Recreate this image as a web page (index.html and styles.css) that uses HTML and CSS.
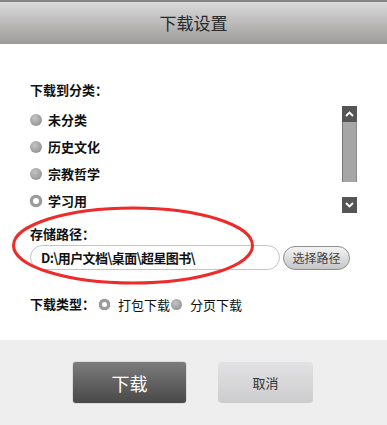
FILE: index.html
```html
<!DOCTYPE html>
<html lang="zh-CN">
<head>
    <meta charset="UTF-8">
    <title>下载设置</title>
    <meta name="viewport" content="width=device-width, initial-scale=1.0">
    <link rel="stylesheet" href="styles.css">
</head>
<body>
    <div class="dialog">
        <div class="header">下载设置</div>
        <div class="content">
            <div class="label">下载到分类：</div>
            <div class="category-box">
                <ul class="category-list">
                    <li><span class="radio"></span>未分类</li>
                    <li><span class="radio"></span>历史文化</li>
                    <li><span class="radio"></span>宗教哲学</li>
                    <li><span class="radio on"></span>学习用</li>
                </ul>
                <div class="scrollbar">
                    <div class="scroll-btn">
                        <svg width="9" height="6" viewBox="0 0 9 6"><polyline points="1,5 4.5,1.5 8,5" fill="none" stroke="#fff" stroke-width="1.8"/></svg>
                    </div>
                    <div class="scroll-track"></div>
                    <div class="scroll-gap"></div>
                    <div class="scroll-btn">
                        <svg width="9" height="6" viewBox="0 0 9 6"><polyline points="1,1 4.5,4.5 8,1" fill="none" stroke="#fff" stroke-width="1.8"/></svg>
                    </div>
                </div>
            </div>
            <div class="label label-path">存储路径：</div>
            <div class="path-row">
                <div class="path-input">D:\用户文档\桌面\超星图书\</div>
                <button class="path-btn">选择路径</button>
            </div>
            <div class="type-row">
                <span class="label">下载类型：</span>
                <span class="radio on"></span><span class="type-text">打包下载</span>
                <span class="radio"></span><span class="type-text">分页下载</span>
            </div>
        </div>
        <div class="footer">
            <button class="btn-download">下载</button>
            <button class="btn-cancel">取消</button>
        </div>
        <!-- red marker drawn over the path field -->
        <svg class="marker" width="387" height="425" viewBox="0 0 387 425">
            <ellipse cx="133" cy="245.5" rx="119.5" ry="37.5" fill="none" stroke="#ee2a2a" stroke-width="3"/>
        </svg>
    </div>
</body>
</html>
```

FILE: styles.css
```css
body { margin: 0; background: #fff; font-family: "Noto Sans CJK SC", "Liberation Sans", sans-serif; color: #111; }
.dialog { position: relative; width: 387px; height: 425px; overflow: hidden; background: #fff; }
.header { height: 42px; border-top: 2px solid #858585; background: linear-gradient(#dadada, #9e9a9a); color: #2a2a2a; font-size: 17px; line-height: 42px; text-align: center; }
.content { height: 296px; padding-left: 30px; box-sizing: border-box; padding-top: 38px; }
.label { font-size: 13px; line-height: 16px; font-weight: bold; }
.category-box { display: flex; margin-top: 8px; }
.category-list { list-style: none; margin: 0; padding: 0; flex: 1; }
.category-list li { height: 27px; display: flex; align-items: center; font-size: 13px; font-weight: bold; }
.radio { display: inline-block; width: 12px; height: 12px; border-radius: 50%; margin-right: 6px; box-sizing: border-box; background: radial-gradient(circle at 40% 35%, #c4c4c4, #868686); }
.radio.on { background: #fff; border: 3px solid #9c9c9c; box-shadow: 0 0 1px #666; }
.scrollbar { width: 15px; margin-right: 30px; display: flex; flex-direction: column; }
.scroll-btn { height: 16px; background: #555; display: flex; align-items: center; justify-content: center; }
.scroll-track { height: 60px; background: #a6a6a6; border-left: 1px solid #7a7a7a; border-right: 1px solid #8a8a8a; box-sizing: border-box; }
.scroll-gap { height: 15px; }
.label-path { margin-top: 12px; }
.path-row { display: flex; align-items: center; margin-top: 3px; }
.path-input { width: 250px; height: 25px; box-sizing: border-box; border: 1px solid #c4c4c4; border-radius: 13px; padding-left: 10px; font-size: 13px; font-weight: bold; line-height: 23px; letter-spacing: -0.6px; }
.path-btn { margin-left: 3px; width: 67px; height: 24px; border: 1px solid #8e8e8e; border-radius: 12px; background: linear-gradient(#f4f4f4, #c6c6c6); font-family: inherit; font-size: 12px; color: #444; padding: 0; }
.type-row { display: flex; align-items: center; margin-top: 26px; height: 16px; }
.type-row .label { margin-right: 4px; }
.type-row .radio { width: 11px; height: 11px; margin-right: 8px; }
.type-text { font-size: 13px; margin-right: 1px; }
.footer { height: 85px; background: #eeeeee; display: flex; align-items: center; padding-left: 73px; gap: 32px; }
.footer button { font-family: inherit; border: none; padding: 0; }
.btn-download { width: 113px; height: 41px; border-radius: 3px; background: linear-gradient(#7c7c7c, #484848); color: #fff; font-size: 18px; box-shadow: 0 0 1px #333; }
.btn-cancel { width: 95px; height: 41px; border-radius: 4px; background: linear-gradient(#e2e2e4, #cdcccd); color: #333; font-size: 13px; }
.marker { position: absolute; left: 0; top: 0; pointer-events: none; }
```
